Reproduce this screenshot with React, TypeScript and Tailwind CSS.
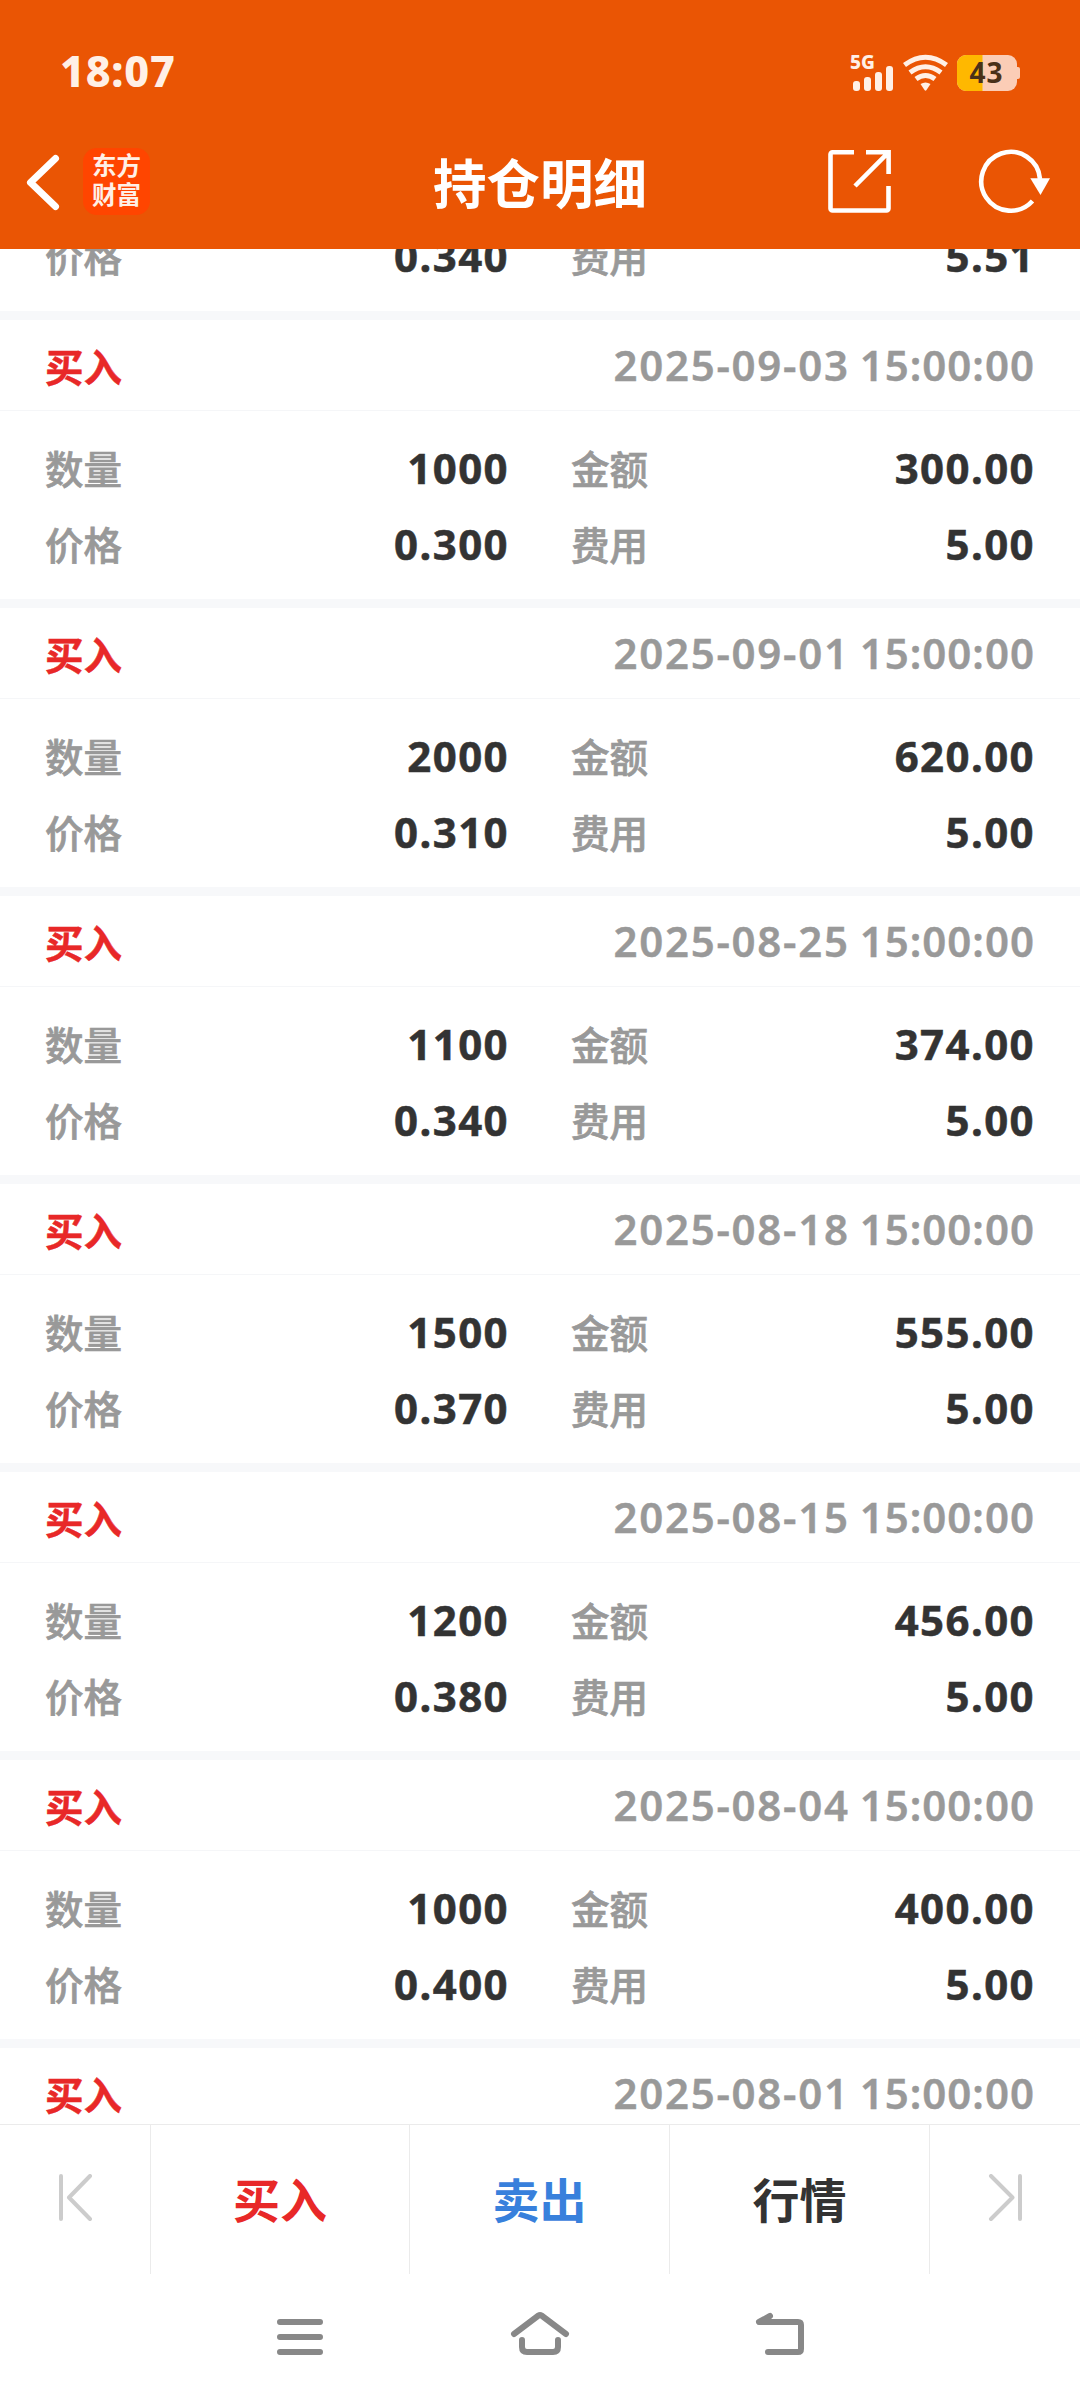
import type { ReactNode } from 'react'

interface Trade {
  date: string
  time: string
  qty: string
  amount: string
  price: string
  fee: string
}

const trades: Trade[] = [
  { date: '2025-09-08', time: '15:00:00', qty: '1500', amount: '510.00', price: '0.340', fee: '5.51' },
  { date: '2025-09-03', time: '15:00:00', qty: '1000', amount: '300.00', price: '0.300', fee: '5.00' },
  { date: '2025-09-01', time: '15:00:00', qty: '2000', amount: '620.00', price: '0.310', fee: '5.00' },
  { date: '2025-08-25', time: '15:00:00', qty: '1100', amount: '374.00', price: '0.340', fee: '5.00' },
  { date: '2025-08-18', time: '15:00:00', qty: '1500', amount: '555.00', price: '0.370', fee: '5.00' },
  { date: '2025-08-15', time: '15:00:00', qty: '1200', amount: '456.00', price: '0.380', fee: '5.00' },
  { date: '2025-08-04', time: '15:00:00', qty: '1000', amount: '400.00', price: '0.400', fee: '5.00' },
  { date: '2025-08-01', time: '15:00:00', qty: '1000', amount: '400.00', price: '0.400', fee: '5.00' },
]

function StatusBar() {
  return (
    <div className="flex h-[114px] items-start justify-between px-[60px] pt-[46px] text-[#fff0e6]">
      <span className="text-[43px] font-extrabold leading-[50px] tracking-[0.8px]">18:07</span>
      <div className="flex pt-[6px]">
        <svg className="overflow-visible" width="170" height="44" viewBox="850 50 170 44">
          <text x="850" y="67" fontSize="19" fontWeight="800" fill="#fff0e6">5G</text>
          <g fill="#fff0e6">
            <rect x="853" y="79" width="7" height="10" rx="3" />
            <rect x="864" y="75" width="7" height="14" rx="3" />
            <rect x="875" y="70" width="7" height="19" rx="3" />
            <rect x="886" y="64" width="7" height="25" rx="3" />
            <path d="M920.500 82q5 -3 10 0l-4 6q-1 1.500 -2 0z" />
          </g>
          <g fill="none" stroke="#fff0e6" strokeWidth="5">
            <path d="M904.500 63q21 -15.500 42 0" />
            <path d="M910 70.500q15.500 -11.500 31 0" />
            <path d="M916 77q9.500 -7 19 0" />
          </g>
          <rect x="957" y="53" width="60" height="36" rx="9" fill="#fbcdb6" />
          <path d="M982.500 53H966a9 9 0 0 0 -9 9v18a9 9 0 0 0 9 9h16.500z" fill="#ffb800" />
          <rect x="1015" y="65" width="5" height="12" rx="2" fill="#fbcdb6" />
          <text x="969.500" y="81" fontSize="28" fontWeight="700" letterSpacing="1" fill="#4a3018">43</text>
        </svg>
      </div>
    </div>
  )
}

function TitleBar() {
  return (
    <div className="flex h-[135px] items-start pt-[34px]">
      <div className="flex w-[360px] items-center">
        <svg className="ml-[24px]" width="36" height="66" viewBox="24 148 36 66" fill="none" stroke="#fff" strokeWidth="7" strokeLinecap="round" strokeLinejoin="round">
          <path d="M55.500 157.500L30.500 181.500L55.500 205.500" />
        </svg>
        <div className="ml-[23px] flex h-[67px] w-[67px] flex-col items-center justify-center rounded-[14px] bg-[#ff4500] pb-[3px] text-[24.5px] font-bold leading-[29px] text-[#fff0e6]">
          <span>东方</span>
          <span>财富</span>
        </div>
      </div>
      <h1 className="w-[360px] text-center text-[53.5px] font-bold leading-[71px] text-white">持仓明细</h1>
      <div className="flex w-[360px]">
        <svg width="360" height="70" viewBox="720 148 360 70" fill="none" stroke="#fff" strokeWidth="4.600">
          <path d="M854 152.300H832.500a2 2 0 0 0 -2 2V208.500a2 2 0 0 0 2 2H886.500a2 2 0 0 0 2 -2V186" />
          <path d="M866 152.300H888.600V174M888 152.800L855 186" />
          <path d="M1032.500 201A29.400 29.400 0 1 1 1040 179" />
          <path d="M1030.300 178.300H1050L1040.500 195z" fill="#fff" stroke="none" />
        </svg>
      </div>
    </div>
  )
}

function Field({ label, value }: { label: string; value: string }) {
  return (
    <div className="flex w-[464px] items-center justify-between">
      <span className="text-[38.5px] font-medium leading-[50px] text-[#999] [-webkit-text-stroke:0.7px_#999]">{label}</span>
      <span className="mb-[3px] text-[42px] font-bold leading-[50px] tracking-[1.4px] text-[#333] [-webkit-text-stroke:0.5px_#333]">{value}</span>
    </div>
  )
}

function TradeCard({ trade }: { trade: Trade }) {
  return (
    <section className="h-[288px] shrink-0 border-b-[9px] border-[#f7f8fa]">
      <div className="flex h-[91px] items-center justify-between border-b border-[#f5f6f8] px-[45px]">
        <span className="pt-[4px] text-[38.5px] font-bold leading-[50px] text-[#e82828] [-webkit-text-stroke:0.5px_#e82828]">买入</span>
        <span className="flex gap-[10px] text-[42px] font-semibold leading-[50px] text-[#999] [-webkit-text-stroke:0.4px_#999]">
          <span className="tracking-[1.7px]">{trade.date}</span>
          <span className="tracking-[1px]">{trade.time}</span>
        </span>
      </div>
      <div className="flex flex-col pl-[45px] pr-[45px] pt-[20px]">
        <div className="flex h-[76px] justify-between">
          <Field label="数量" value={trade.qty} />
          <Field label="金额" value={trade.amount} />
        </div>
        <div className="flex h-[76px] justify-between">
          <Field label="价格" value={trade.price} />
          <Field label="费用" value={trade.fee} />
        </div>
      </div>
    </section>
  )
}

function BarCell({ className, children }: { className: string; children: ReactNode }) {
  return <div className={`flex items-center justify-center border-[#ebebeb] pt-[2px] text-[47px] font-bold ${className}`}>{children}</div>
}

function BottomBar() {
  return (
    <div className="flex h-[150px] border-t border-[#ebebeb]">
      <BarCell className="w-[151px] border-r">
        <svg width="40" height="54" viewBox="55 2174 40 54" fill="none" stroke="#ccc" strokeWidth="4" strokeLinecap="round" strokeLinejoin="round">
          <path d="M61 2176V2219M90 2176L69 2197.500L90 2219" />
        </svg>
      </BarCell>
      <BarCell className="w-[259px] border-r text-[#e82828]">买入</BarCell>
      <BarCell className="w-[260px] border-r text-[#3880dc]">卖出</BarCell>
      <BarCell className="w-[260px] border-r text-[#333]">行情</BarCell>
      <BarCell className="w-[150px]">
        <svg width="40" height="54" viewBox="985 2174 40 54" fill="none" stroke="#ccc" strokeWidth="4" strokeLinecap="round" strokeLinejoin="round">
          <path d="M1020 2176V2219M991 2176L1012.500 2197.500L991 2219" />
        </svg>
      </BarCell>
    </div>
  )
}

function SystemNav() {
  return (
    <div className="flex h-[126px] justify-center pt-[36px]">
      <svg width="560" height="50" viewBox="260 2310 560 50" fill="none" stroke="#888" strokeWidth="6" strokeLinecap="round" strokeLinejoin="round">
        <path d="M280 2322H320M280 2337H320M280 2352H320" />
        <path d="M514 2334L538.500 2315.500Q540 2314.500 541.500 2315.500L566 2334" />
        <path d="M522 2340V2347Q522 2352 527 2352H553Q558 2352 558 2347V2340" />
        <path d="M770 2316L759 2322H798Q801 2322 801 2325V2349Q801 2352 798 2352H768" />
      </svg>
    </div>
  )
}

export default function App() {
  return (
    <div className="flex h-[2400px] w-[1080px] flex-col overflow-hidden bg-white font-['Noto_Sans','Noto_Sans_CJK_SC',sans-serif]">
      <header className="h-[249px] shrink-0 bg-[#ea5504]">
        <StatusBar />
        <TitleBar />
      </header>
      <main className="flex h-[1875px] shrink-0 flex-col overflow-hidden">
        {/* list is scrolled part way through its first card */}
        <div className="-mt-[217px] flex flex-col">
          {trades.map(t => <TradeCard key={t.date} trade={t} />)}
        </div>
      </main>
      <BottomBar />
      <SystemNav />
    </div>
  )
}
